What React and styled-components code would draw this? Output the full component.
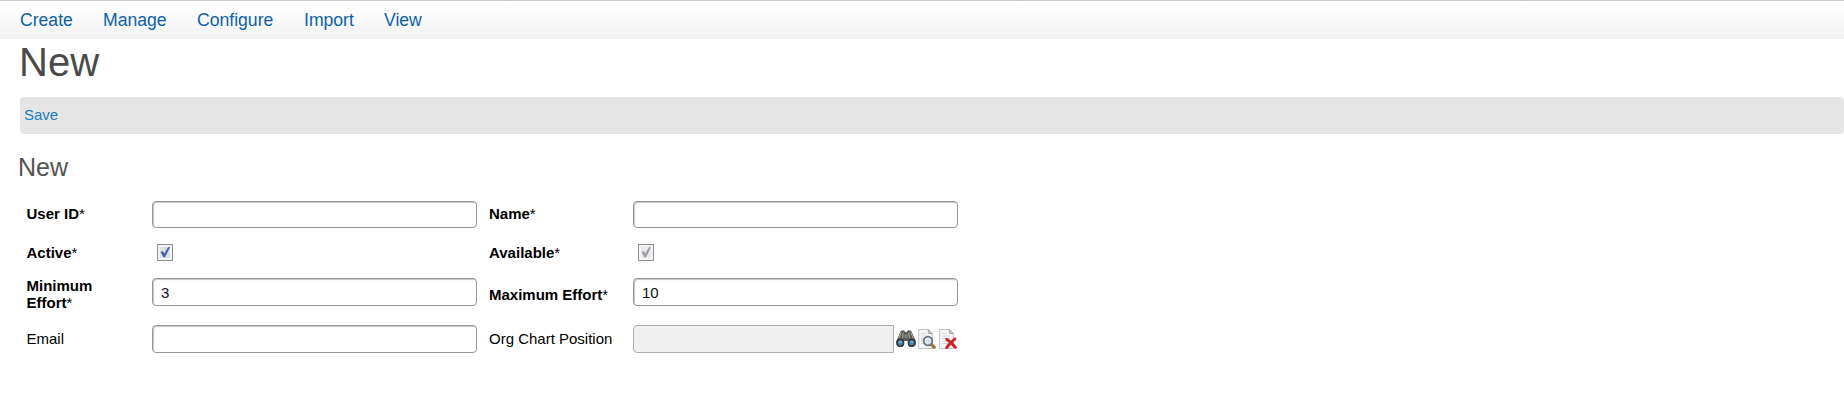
import React from "react";
import styled, { createGlobalStyle } from "styled-components";

const GlobalStyle = createGlobalStyle`
  * { box-sizing: border-box; }
  body { margin: 0; background: #fff; color: #000; font-family: "Liberation Sans", Arial, sans-serif; font-size: 15px; overflow: hidden; }
`;

const Page = styled.div`
  height: 404px;
`;

const Nav = styled.nav`
  display: flex;
  gap: 30px;
  height: 39px;
  padding: 8px 0 0 20px;
  border-top: 1px solid #c8c8c8;
  background: linear-gradient(#fff, #f2f2f2);
`;

const NavLink = styled.a`
  width: ${(p) => p.$w}px;
  font-size: 17.6px;
  line-height: 22px;
  white-space: nowrap;
  color: #0b61ad;
`;

const Title = styled.h1`
  margin: 0 0 0 19px;
  height: 58px;
  font-size: 40px;
  line-height: 46px;
  font-weight: 400;
  color: #4a4a4a;
`;

const Toolbar = styled.div`
  height: 37px;
  margin-left: 20px;
  padding: 9px 4px;
  border-radius: 4px;
  background: #e5e5e5;
`;

const ToolbarLink = styled.a`
  display: block;
  line-height: 17px;
  color: #167dbd;
`;

const SectionTitle = styled.h2`
  margin: 19px 0 0 18px;
  height: 48px;
  font-size: 25px;
  line-height: 29px;
  font-weight: 400;
  color: #555;
`;

const Form = styled.form`
  display: grid;
  grid-template-columns: 125.5px 337px 144px 326px;
  grid-template-rows: 27px 50px 28px 66px;
  align-items: center;
  padding-left: 26.5px;
`;

const Label = styled.label`
  padding-top: ${(p) => p.$drop || 0}px;
  padding-bottom: ${(p) => (p.$drop ? 0 : 2)}px;
  padding-right: ${(p) => (p.$narrow ? 40 : 0)}px;
  line-height: 17px;
  font-weight: ${(p) => (p.$required ? 700 : 400)};
  &::after {
    content: "${(p) => (p.$required ? "*" : "")}";
    font-weight: 400;
  }
`;

const Input = styled.input`
  width: ${(p) => p.$width || 325}px;
  height: ${(p) => p.$height || 28}px;
  flex: none;
  padding: 0 8px;
  border: 1px solid ${(p) => (p.disabled ? "#a9adb5" : "#969696")};
  border-radius: ${(p) => (p.disabled ? "4px 0 0 4px" : "4px")};
  background: ${(p) => (p.disabled ? "#f0f0f0" : "#fff")};
  box-shadow: ${(p) => (p.disabled ? "none" : "inset 1px 1px 1px #c5c5c5")};
  font: 15px "Liberation Sans", Arial, sans-serif;
  color: #111;
  outline: 0;
`;

const CheckSvg = styled.svg`
  display: block;
  margin: 0 0 1px 5px;
`;

const Lookup = styled.div`
  display: flex;
  align-items: center;
  gap: 2px;
`;

const Icon = styled.svg`
  flex: none;
`;

const Check = ({ color, tint }) => (
  <CheckSvg width="16" height="17" viewBox="0 0 16 17">
    <rect x=".5" y=".5" width="15" height="16" fill="#f4f4f4" stroke="#8e8f8f" />
    <rect x="3" y="3" width="10" height="11" fill={tint} />
    <path d="M3.5 8 5.8 7.1 7.3 9.5 11 3.2 13.2 3 8 13.2H6.5z" fill={color} />
  </CheckSvg>
);

const Binoculars = () => (
  <Icon width="20" height="20" viewBox="0 0 20 20">
    <path d="M4 3.5 5 1.8 8 1.2 9.2 3h1.6L12 1.2l3 .6 1 1.7 3.7 8.5v3.5L17.5 18h-4L12 16v-4H8v4l-1.5 2h-4L.3 15.5V12z" fill="#5c5b57" />
    <path d="M5.2 3.5 2.8 9M7.3 3.5 6.5 9M12.7 3.5l.8 5.5M14.8 3.5 17.2 9" stroke="#aaa699" strokeWidth="1.1" />
    <path d="M8.5 5.5h3v3.5h-3z" fill="#85827b" />
    <circle cx="4.3" cy="13.8" r="3.3" fill="#4489b5" stroke="#30363a" strokeWidth="1.5" />
    <circle cx="15.7" cy="13.8" r="3.3" fill="#4489b5" stroke="#30363a" strokeWidth="1.5" />
    <path d="M3 13.4q1.4-1.8 2.8 0M14.2 13.4q1.4-1.8 2.8 0" fill="none" stroke="#93c4dc" />
  </Icon>
);

const Paper = () => (
  <>
    <path d="M.7.5h9.6l4 4v15H.7z" fill="#f7f8fa" stroke="#bfc1c4" />
    <path d="M10.3.5v4h4z" fill="#d4d5d7" stroke="#a4a6a9" />
    <path d="M3 4.5h5M3 7h8M3 9.5h8M3 12h8M3 14.5h7" stroke="#d2d5da" />
  </>
);

const ViewRecord = () => (
  <Icon width="19" height="20" viewBox="0 0 19 20">
    <Paper />
    <path d="m13.4 15.4 2.9 3" stroke="#9b7c42" strokeWidth="3.2" strokeLinecap="round" />
    <circle cx="10" cy="12" r="4.3" fill="#d6e5f1" stroke="#6c737b" strokeWidth="1.8" />
    <path d="M7.8 11.5q.5-1.8 2.2-2" fill="none" stroke="#fff" />
  </Icon>
);

const ClearRecord = () => (
  <Icon width="18" height="20" viewBox="0 0 18 20">
    <Paper />
    <path d="M7.7 10.2q5 3.3 8.7 8.2M16 9.8q-5 4-8.3 8.8" fill="none" stroke="#ca252b" strokeWidth="2.9" strokeLinecap="round" />
  </Icon>
);

export default function App() {
  return (
    <Page>
      <GlobalStyle />
      <Nav>
        <NavLink $w={53}>Create</NavLink>
        <NavLink $w={64}>Manage</NavLink>
        <NavLink $w={77}>Configure</NavLink>
        <NavLink $w={50}>Import</NavLink>
        <NavLink $w={40}>View</NavLink>
      </Nav>
      <Title>New</Title>
      <Toolbar><ToolbarLink>Save</ToolbarLink></Toolbar>
      <SectionTitle>New</SectionTitle>
      <Form>
        <Label $required>User ID</Label>
        <Input $height={27} />
        <Label $required>Name</Label>
        <Input $height={27} />
        <Label $required>Active</Label>
        <Check color="#4560a8" tint="#dce2ea" />
        <Label $required>Available</Label>
        <Check color="#9a9fa6" tint="#e8e8e8" />
        <Label $required $narrow $drop={4}>Minimum Effort</Label>
        <Input defaultValue="3" />
        <Label $required $drop={4}>Maximum Effort</Label>
        <Input defaultValue="10" />
        <Label>Email</Label>
        <Input />
        <Label>Org Chart Position</Label>
        <Lookup>
          <Input disabled $width={261} />
          <Binoculars />
          <ViewRecord />
          <ClearRecord />
        </Lookup>
      </Form>
    </Page>
  );
}
